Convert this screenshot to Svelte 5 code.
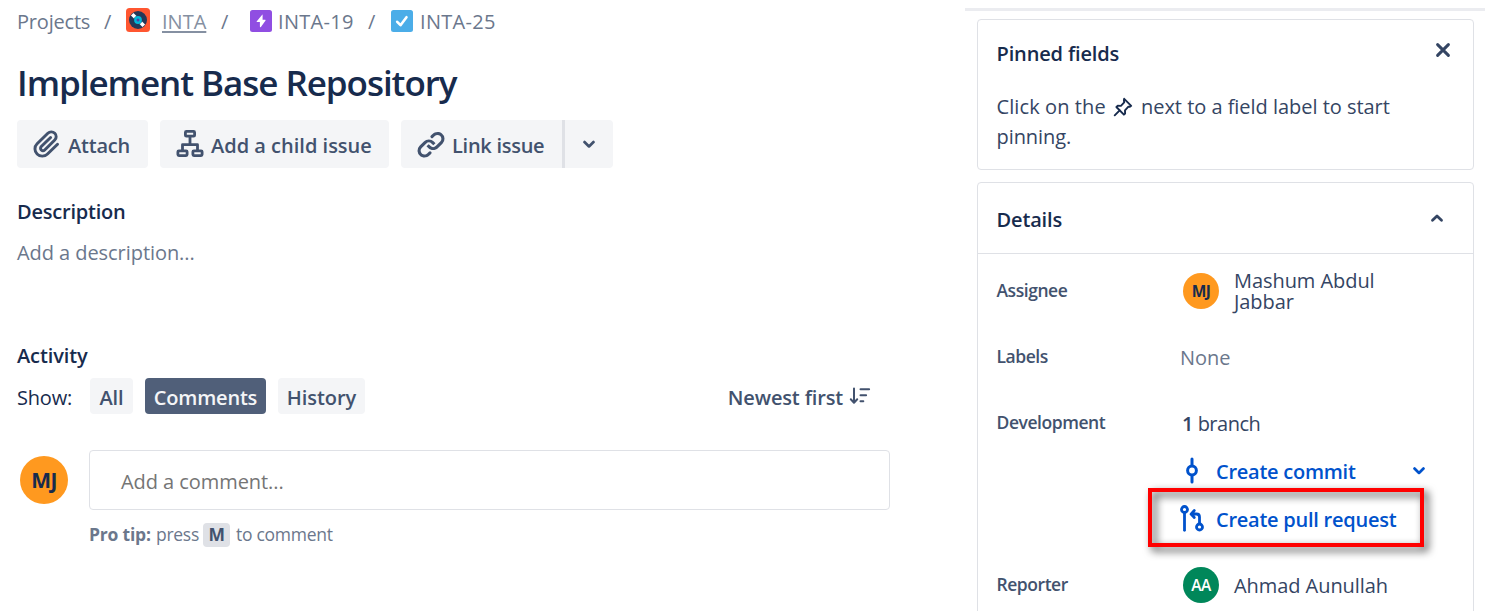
<script>
  const filters = [
    { name: 'All', active: false },
    { name: 'Comments', active: true },
    { name: 'History', active: false }
  ];
</script>

<div class="page">
  <main>
    <nav class="crumbs">
      <span class="c-projects">Projects</span>
      <span class="slash s1">/</span>
      <svg class="project" width="24" height="24" viewBox="0 0 24 24">
        <rect width="24" height="24" rx="3.5" fill="#ff5630" />
        <circle cx="12" cy="12" r="9" fill="#253858" />
        <path d="M6.2 6.2 17.8 17.8" stroke="#fff" stroke-width="3.6" />
        <circle cx="12" cy="12" r="4.3" fill="#253858" />
        <circle cx="12" cy="12" r="3.9" fill="#00b8d9" />
        <circle cx="12" cy="12" r="1.5" fill="#5243aa" />
      </svg>
      <span class="c-key">INTA</span>
      <span class="slash s2">/</span>
      <svg class="epic" width="22" height="22" viewBox="0 0 22 22">
        <rect width="22" height="22" rx="2.5" fill="#904ee2" />
        <path d="M12.2 4.8 6.8 11.2c-.3.5-.1.9.5.9h2.6v4.5c0 .7.6.8 1 .3l4.5-6.1c.4-.5.1-1-.5-1h-2.3V5.2c0-.7-.1-.7-.4-.4z" fill="#fff" />
      </svg>
      <span class="c-issue">INTA-19</span>
      <span class="slash s3">/</span>
      <svg class="task" width="22" height="22" viewBox="0 0 22 22">
        <rect width="22" height="22" rx="2.5" fill="#4bade8" />
        <path d="m6.2 11.8 3.3 3.4 6-8" fill="none" stroke="#fff" stroke-width="2.6" stroke-linecap="round" stroke-linejoin="round" />
      </svg>
      <span class="c-issue">INTA-25</span>
    </nav>

    <h1><span>Implement Base Repository</span></h1>

    <div class="actions">
      <button class="btn attach">
        <svg width="36" height="36" viewBox="0 0 24 24" fill="currentColor">
          <path d="M11.643 17.965c-1.53 1.495-4.016 1.496-5.542.004a3.773 3.773 0 01.002-5.412l7.147-6.985a2.316 2.316 0 013.233-.003c.893.873.895 2.282.004 3.153l-6.703 6.55a.653.653 0 01-.914-.008.62.62 0 010-.902l6.229-6.087a.941.941 0 000-1.353.995.995 0 00-1.384 0l-6.23 6.087a2.502 2.502 0 000 3.607 2.643 2.643 0 003.683.009l6.703-6.55a4.152 4.152 0 00-.003-5.859 4.306 4.306 0 00-5.998.003l-7.148 6.985a5.655 5.655 0 00-.002 8.118c2.291 2.239 6.015 2.238 8.31-.005l6.686-6.533a.941.941 0 000-1.353.995.995 0 00-1.384 0l-6.687 6.534z" />
        </svg>
        <span>Attach</span>
      </button>
      <button class="btn child">
        <svg width="36" height="36" viewBox="0 0 36 36" fill="none" stroke="currentColor" stroke-width="2.8">
          <rect x="13.4" y="5.4" width="9.2" height="4.8" rx="1" />
          <rect x="5.9" y="24.8" width="9.2" height="4.8" rx="1" />
          <rect x="20.9" y="24.8" width="9.2" height="4.8" rx="1" />
          <path d="M18 11v7M10.5 24v-5.3h15V24" stroke-linejoin="round" />
        </svg>
        <span>Add a child issue</span>
      </button>
      <div class="split">
        <button class="btn link">
          <svg width="36" height="36" viewBox="0 0 24 24" fill="currentColor">
            <path d="M12.856 5.457l-.937.92a1.002 1.002 0 000 1.437 1.047 1.047 0 001.463 0l.984-.966c.967-.95 2.542-1.135 3.602-.288a2.54 2.54 0 01.203 3.81l-2.903 2.852a2.646 2.646 0 01-3.696 0l-1.11-1.09L9 13.57l1.108 1.089c1.822 1.788 4.802 1.788 6.622 0l2.905-2.852a4.558 4.558 0 00-.357-6.82c-1.893-1.517-4.695-1.226-6.422.47" />
            <path d="M11.144 19.543l.937-.92a1.002 1.002 0 000-1.437 1.047 1.047 0 00-1.462 0l-.985.966c-.967.95-2.542 1.135-3.602.288a2.54 2.54 0 01-.203-3.81l2.903-2.852a2.646 2.646 0 013.696 0l1.11 1.09L15 11.43l-1.108-1.089c-1.822-1.788-4.802-1.788-6.622 0l-2.905 2.852a4.558 4.558 0 00.357 6.82c1.893 1.517 4.695 1.226 6.422-.47" />
          </svg>
          <span>Link issue</span>
        </button>
        <button class="btn more" aria-label="More">
          <svg width="14" height="10" viewBox="0 0 14 10" fill="none" stroke="currentColor" stroke-width="2.8" stroke-linecap="round" stroke-linejoin="round">
            <path d="m2.5 3.1 4.5 4.3 4.5-4.3" />
          </svg>
        </button>
      </div>
    </div>

    <h2 class="h-desc"><span>Description</span></h2>
    <p class="placeholder"><span>Add a description...</span></p>

    <h2 class="h-act"><span>Activity</span></h2>
    <div class="show">
      <span class="show-label">Show:</span>
      {#each filters as f}
        <button class="chip {f.name.toLowerCase()}" class:active={f.active}><span>{f.name}</span></button>
      {/each}
      <button class="sort">
        <span>Newest first</span>
        <svg width="22" height="18" viewBox="0 0 22 18" fill="none" stroke="currentColor" stroke-width="2" stroke-linecap="round">
          <path d="M5 1.5v14M1.8 12.3 5 15.7l3.2-3.4" stroke-linejoin="round" />
          <path d="M11.5 2.3h8.6M11.5 8.3h5.6M11.5 14.2h2.8" />
        </svg>
      </button>
    </div>

    <div class="comment">
      <div class="avatar big"><span>MJ</span></div>
      <div class="field"><span>Add a comment...</span></div>
    </div>
    <p class="tip"><b>Pro tip:</b><span class="t1">press</span><kbd>M</kbd><span class="t2">to comment</span></p>
  </main>

  <aside>
    <section class="card pinned">
      <header>
        <h3>Pinned fields</h3>
        <svg width="16" height="16" viewBox="0 0 16 16" fill="none" stroke="#344563" stroke-width="3" stroke-linecap="round">
          <path d="m2.6 2.6 10.8 10.8M13.4 2.6 2.6 13.4" />
        </svg>
      </header>
      <div class="hint">
        <div class="line">
          <span class="p1">Click on the</span>
          <svg width="20" height="20" viewBox="0 0 20 20" fill="none" stroke="#172b4d" stroke-width="1.9" stroke-linejoin="round" stroke-linecap="round">
            <path d="m11.2 1.8 7 7-1.6 1.1-1.2-.2-3.4 3.6.1 3.2-1.2 1.2L3.4 10l1.2-1.2 3.3.1 3.3-3.6-.3-1.9z" />
            <path d="m6.7 13.3-5 5" />
          </svg>
          <span class="p2">next to a field label to start</span>
        </div>
        <div class="line"><span class="p3">pinning.</span></div>
      </div>
    </section>

    <section class="card details">
      <header>
        <h3>Details</h3>
        <svg width="14" height="10" viewBox="0 0 14 10" fill="none" stroke="#344563" stroke-width="2.8" stroke-linecap="round" stroke-linejoin="round">
          <path d="M2.5 7.2 7 2.9l4.5 4.3" />
        </svg>
      </header>
      <div class="row assignee">
        <span class="label">Assignee</span>
        <div class="person">
          <div class="avatar"><span>MJ</span></div>
          <span class="name">Mashum Abdul<br />Jabbar</span>
        </div>
      </div>
      <div class="row labels">
        <span class="label">Labels</span>
        <span class="none">None</span>
      </div>
      <div class="row dev">
        <span class="label">Development</span>
        <span class="branch"><b>1</b> branch</span>
      </div>
      <a class="dev-link commit" href="#commit">
        <svg width="24" height="30" viewBox="0 0 24 30" fill="none" stroke="currentColor" stroke-width="3" stroke-linecap="round">
          <circle cx="12" cy="14.5" r="4.4" />
          <path d="M12 3v6.3M12 19.7v6.3" />
        </svg>
        <span>Create commit</span>
        <svg class="chev" width="14" height="10" viewBox="0 0 14 10" fill="none" stroke="currentColor" stroke-width="2.8" stroke-linecap="round" stroke-linejoin="round">
          <path d="m2.5 2.6 4.5 4.3 4.5-4.3" />
        </svg>
      </a>
      <a class="dev-link pull" href="#pull">
        <svg width="24" height="30" viewBox="0 0 24 30" fill="none" stroke="currentColor" stroke-width="2.8" stroke-linecap="round" stroke-linejoin="round">
          <circle cx="4.5" cy="5.5" r="3" />
          <path d="M4.5 9v17.3" />
          <circle cx="19.5" cy="23" r="3" />
          <path d="M19.5 19.5V13q0-3-3-3h-4.3M14.3 6.5l-3.3 3.6 3.3 3.4" />
        </svg>
        <span>Create pull request</span>
        <i class="frame"></i>
      </a>
      <div class="row reporter">
        <span class="label">Reporter</span>
        <div class="person">
          <div class="avatar green"><span>AA</span></div>
          <span class="name">Ahmad Aunullah</span>
        </div>
      </div>
    </section>
  </aside>
</div>

<style>
  :global(body) {
    margin: 0;
    background: #fff;
    overflow: hidden;
  }
  .page {
    --semi: 560;
    display: flex;
    width: 1491px;
    height: 611px;
    overflow: hidden;
    box-sizing: border-box;
    font-family: 'Open Sans', 'Noto Sans', sans-serif;
    font-size: 20px;
    line-height: 30px;
    color: #172b4d;
    white-space: nowrap;
    letter-spacing: -0.06px;
  }
  h1, h2, h3, p { margin: 0; }
  svg { display: block; flex: none; }
  button {
    border: 0;
    padding: 0;
    background: none;
    font: inherit;
    letter-spacing: inherit;
    color: #42526e;
  }
  main {
    width: 873px;
    padding-left: 17px;
    margin-right: 75px;
    flex: none;
  }
  .crumbs {
    display: flex;
    align-items: center;
    height: 42px;
    color: #6b778c;
  }
  .crumbs span { padding-top: 1px; }
  .slash { width: 8px; }
  .s1 { margin: 0 14px 0 14px; }
  .c-projects { width: 73px; letter-spacing: -0.2px; }
  .project { margin-right: 12px; margin-top: -3px; }
  .c-key {
    color: #8590a2;
    text-decoration: underline;
    text-decoration-thickness: 1.5px;
    text-underline-offset: 2px;
    width: 45px;
    letter-spacing: 0;
  }
  .s2 { margin: 0 21px 0 14px; }
  .epic { margin-right: 6px; }
  .task { margin-right: 7px; }
  .c-issue { width: 77px; letter-spacing: 0.3px; }
  .s3 { margin: 0 15px 0 13px; }
  h1 {
    font-size: 35px;
    font-weight: var(--semi);
    line-height: 48px;
    height: 48px;
    padding-top: 17px;
    padding-bottom: 13px;
    letter-spacing: -1.05px;
  }
  .actions { display: flex; gap: 12px; height: 48px; }
  .btn {
    display: flex;
    align-items: center;
    height: 48px;
    background: #f4f5f7;
    border-radius: 4px;
    font-weight: var(--semi);
    padding-left: 12px;
    box-sizing: border-box;
  }
  .btn span { margin-left: 3px; padding-top: 3px; }
  .attach { width: 131px; letter-spacing: -0.2px; }
  .child { width: 229px; letter-spacing: 0; }
  .split { display: flex; }
  .link { width: 161px; border-radius: 4px 0 0 4px; letter-spacing: -0.27px; }
  .more {
    width: 51px;
    border-left: 3px solid #dfe1e6;
    border-radius: 0 4px 4px 0;
    padding-left: 17px;
  }
  h2 { font-size: 20px; font-weight: var(--semi); line-height: 30px; letter-spacing: -0.1px; }
  .h-desc { padding-top: 29px; letter-spacing: -0.22px; }
  .placeholder { color: #6b778c; padding-top: 11px; }
  .h-act { padding-top: 73px; }
  .show { display: flex; align-items: center; height: 36px; padding-top: 7px; }
  .show-label { width: 73px; padding-top: 3px; letter-spacing: -0.2px; }
  .chip {
    height: 36px;
    border-radius: 4px;
    background: #f4f5f7;
    font-weight: var(--semi);
    margin-right: 12px;
    padding-top: 3px;
    text-align: center;
  }
  .all { width: 43px; }
  .comments { width: 121px; letter-spacing: -0.2px; }
  .history { width: 87px; }
  .chip.active { background: #505f79; color: #f4f5f7; }
  .sort {
    display: flex;
    align-items: center;
    margin-left: auto;
    font-weight: var(--semi);
    margin-right: 19px;
    gap: 6px;
    letter-spacing: -0.15px;
  }
  .sort span { padding-top: 3px; }
  .comment { display: flex; align-items: center; padding-top: 36px; height: 60px; }
  .avatar {
    width: 36px;
    height: 36px;
    border-radius: 50%;
    background: #ff991f;
    color: #172b4d;
    font-size: 15.5px;
    font-weight: 700;
    letter-spacing: -0.6px;
    display: flex;
    align-items: center;
    justify-content: center;
    flex: none;
  }
  .avatar.green { background: #00875a; color: #fff; font-weight: 600; }
  .avatar.big { width: 48px; height: 48px; font-size: 21px; margin: 0 21px 0 3px; }
  .field {
    width: 801px;
    height: 60px;
    box-sizing: border-box;
    border: 1px solid #dfe1e6;
    border-radius: 4px;
    padding: 16px 0 0 31px;
    color: #757575;
  }
  .tip {
    display: flex;
    align-items: center;
    font-size: 17.5px;
    line-height: 22px;
    padding: 13px 0 0 72px;
    color: #6b778c;
    letter-spacing: -0.28px;
  }
  .tip b { width: 67px; letter-spacing: -0.2px; }
  .tip b, .tip span { height: 24px; }
  kbd {
    font: inherit;
    font-weight: 700;
    background: #dfe1e6;
    color: #42526e;
    border-radius: 4px;
    width: 27px;
    height: 24px;
    text-align: center;
    margin: 0 6px 0 5px;
  }
  .t1 { width: 42px; }
  aside { width: 520px; flex: none; padding-top: 8px; }
  aside::before { content: ''; display: block; height: 3px; background: #ebecf0; }
  .card {
    margin-left: 12px;
    width: 497px;
    box-sizing: border-box;
    border: 1px solid #dfe1e6;
    border-radius: 4px;
  }
  .pinned { margin-top: 8px; height: 151px; padding: 18px 22px 0 18.5px; }
  .card header { display: flex; justify-content: space-between; }
  .pinned header svg { margin-top: 4px; }
  h3 { font-size: 20px; font-weight: var(--semi); line-height: 30px; letter-spacing: -0.15px; }
  .pinned h3 { padding-top: 1px; }
  .hint { padding-top: 23px; color: #344563; }
  .line { display: flex; align-items: center; height: 30px; }
  .line svg { margin: 0 8px 0 8.5px; }
  .p1 { width: 108px; letter-spacing: 0.1px; }
  .p2 { letter-spacing: -0.03px; }
  .details { margin-top: 12px; height: 440px; border-radius: 4px 4px 0 0; }
  .details header {
    height: 70px;
    border-bottom: 1px solid #dfe1e6;
    align-items: center;
    padding: 0 29px 0 18.5px;
  }
  .details h3 { padding-top: 3px; }
  .row { display: flex; align-items: center; padding-left: 18.5px; height: 66px; color: #344563; }
  .label {
    width: 183.5px;
    font-size: 17.5px;
    font-weight: var(--semi);
    color: #42526e;
    flex: none;
    padding-bottom: 2px;
    letter-spacing: -0.45px;
  }
  .person { display: flex; align-items: center; padding-left: 3px; }
  .name { margin-left: 15px; line-height: 21px; }
  .assignee { height: 74px; }
  .labels { height: 58px; }
  .none { color: #6b778c; padding-top: 1px; }
  .dev { height: 74px; }
  .branch { padding: 1px 0 0 2px; letter-spacing: -0.5px; }
  .branch b { font-weight: 600; }
  .dev-link {
    display: flex;
    align-items: center;
    position: relative;
    height: 48px;
    padding-left: 202px;
    color: #0052cc;
    font-weight: var(--semi);
    text-decoration: none;
    letter-spacing: -0.25px;
  }
  .commit { margin-top: -13px; }
  .dev-link span { margin-left: 12px; padding-top: 2px; }
  .chev { margin-left: auto; margin-right: 47px; }
  .frame {
    position: absolute;
    left: 170px;
    top: -7px;
    width: 276px;
    height: 59px;
    box-sizing: border-box;
    border: 4px solid #f00;
    filter: drop-shadow(4px 4px 4px rgba(0, 0, 0, 0.75));
  }
  .reporter { padding-top: 9px; }
</style>
